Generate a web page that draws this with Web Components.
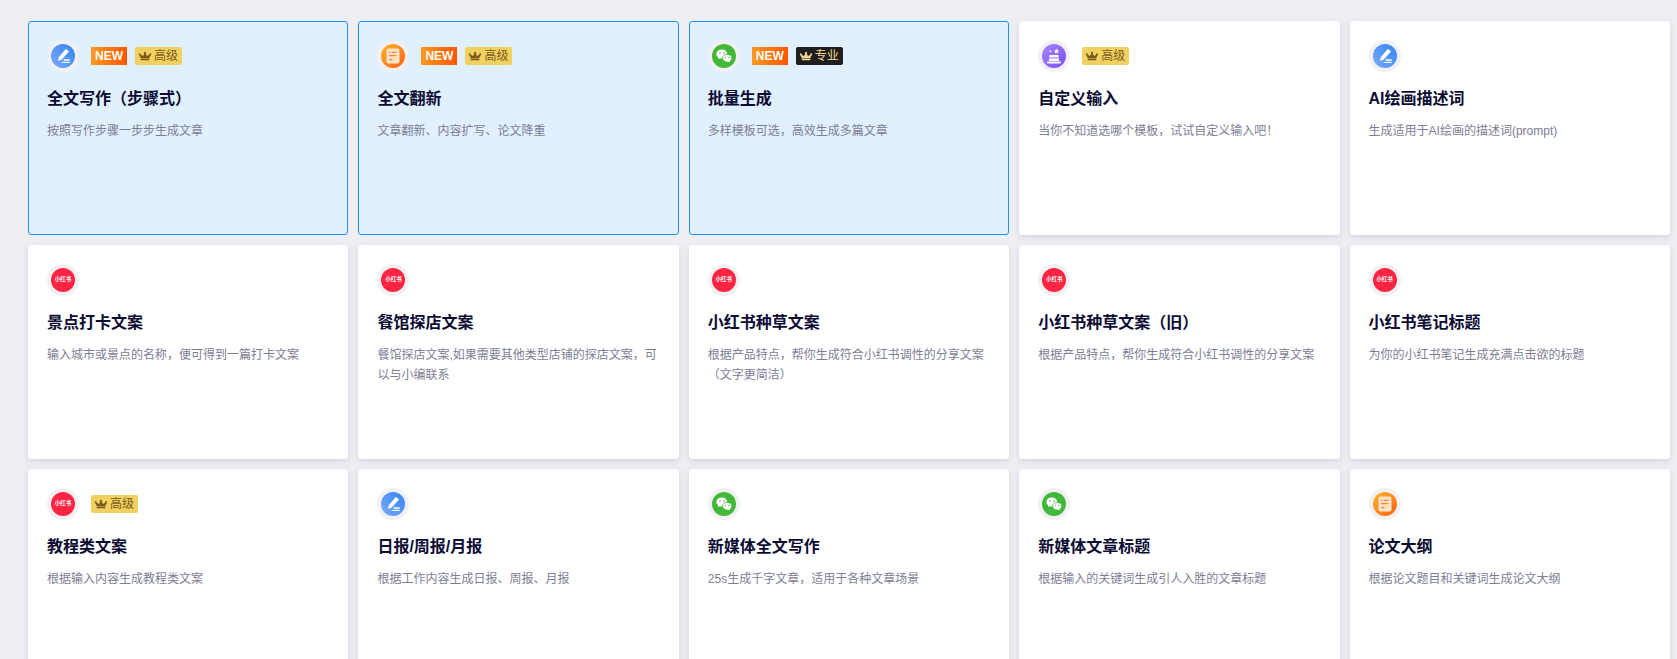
<!DOCTYPE html>
<html lang="zh-CN"><head><meta charset="utf-8"><title>Templates</title>
<style>
html,body{margin:0;height:659px;overflow:hidden;background:#eeeef3;font-family:"Liberation Sans","Noto Sans CJK SC",sans-serif}
</style></head><body>
<card-grid>
<tool-card selected icon="pen" name="全文写作&#65288;步骤式&#65289;" desc="按照写作步骤一步步生成文章"><new-badge></new-badge><tier-badge>高级</tier-badge></tool-card>
<tool-card selected icon="doc" name="全文翻新" desc="文章翻新、内容扩写、论文降重"><new-badge></new-badge><tier-badge>高级</tier-badge></tool-card>
<tool-card selected icon="wechat" name="批量生成" desc="多样模板可选&#65292;高效生成多篇文章"><new-badge></new-badge><tier-badge dark>专业</tier-badge></tool-card>
<tool-card icon="magic" name="自定义输入" desc="当你不知道选哪个模板&#65292;试试自定义输入吧&#65281;"><tier-badge>高级</tier-badge></tool-card>
<tool-card icon="pen" name="AI绘画描述词" desc="生成适用于AI绘画的描述词(prompt)"></tool-card>
<tool-card icon="red" name="景点打卡文案" desc="输入城市或景点的名称&#65292;便可得到一篇打卡文案"></tool-card>
<tool-card icon="red" name="餐馆探店文案" desc="餐馆探店文案,如果需要其他类型店铺的探店文案&#65292;可以与小编联系"></tool-card>
<tool-card icon="red" name="小红书种草文案" desc="根据产品特点&#65292;帮你生成符合小红书调性的分享文案&#65288;文字更简洁&#65289;"></tool-card>
<tool-card icon="red" name="小红书种草文案&#65288;旧&#65289;" desc="根据产品特点&#65292;帮你生成符合小红书调性的分享文案"></tool-card>
<tool-card icon="red" name="小红书笔记标题" desc="为你的小红书笔记生成充满点击欲的标题"></tool-card>
<tool-card icon="red" name="教程类文案" desc="根据输入内容生成教程类文案"><tier-badge>高级</tier-badge></tool-card>
<tool-card icon="pen" name="日报/周报/月报" desc="根据工作内容生成日报、周报、月报"></tool-card>
<tool-card icon="wechat" name="新媒体全文写作" desc="25s生成千字文章&#65292;适用于各种文章场景"></tool-card>
<tool-card icon="wechat" name="新媒体文章标题" desc="根据输入的关键词生成引人入胜的文章标题"></tool-card>
<tool-card icon="doc" name="论文大纲" desc="根据论文题目和关键词生成论文大纲"></tool-card>
</card-grid>
<script>
const CROWN='<svg viewBox="0 0 14 11" width="12" height="10" aria-hidden="true"><path fill="currentColor" d="M7 .6a1.3 1.3 0 0 1 .8 2.3L9.4 5.4 12 3.9a1.2 1.2 0 1 1 1.1.9L12 8H2L.9 4.8A1.2 1.2 0 1 1 2 3.9l2.6 1.5L6.2 2.9A1.3 1.3 0 0 1 7 .6zM2 8.8h10V10.6H2z"/></svg>';
customElements.define('card-grid',class extends HTMLElement{constructor(){super();this.attachShadow({mode:'open'}).innerHTML=`<style>:host{display:grid;grid-template-columns:repeat(5,320.4px);grid-auto-rows:214px;gap:10px;padding:21px 0 0 28px}</style><slot></slot>`}});
customElements.define('new-badge',class extends HTMLElement{constructor(){super();this.attachShadow({mode:'open'}).innerHTML=`<style>:host{display:inline-flex;align-items:center;justify-content:center;width:36px;height:18px;background:linear-gradient(90deg,#ff9a1e,#ff5500);color:#fff;font:700 12px/18px "Liberation Sans",sans-serif}</style>NEW`}});
customElements.define('tier-badge',class extends HTMLElement{constructor(){super();this.attachShadow({mode:'open'}).innerHTML=`<style>:host{display:inline-flex;align-items:center;gap:3px;height:18px;padding:0 4px;border-radius:2px;background:#f0d160;color:#7a5a1c;font:12px/18px "Liberation Sans","Noto Sans CJK SC",sans-serif}:host([dark]){background:#1f1e1c;color:#f2d795}svg{display:block}</style>${CROWN}<slot></slot>`}});
const ICONS={
pen:`<defs><linearGradient id="g" x1="0" y1="1" x2="1" y2="0"><stop offset="0" stop-color="#7fa8ff"/><stop offset="1" stop-color="#2f86f0"/></linearGradient></defs><circle cx="12" cy="12" r="12" fill="url(#g)"/><path fill="#fff" d="M15 4.8l3 2.6-7.2 8.2-3.8 1.4.9-3.9z"/><rect x="12.6" y="15.2" width="6.4" height="1.6" rx=".8" fill="#fff"/><rect x="10.5" y="17.8" width="8.5" height="1.3" rx=".6" fill="#fff" opacity=".85"/>`,
doc:`<defs><linearGradient id="g" x1="0" y1="0" x2="1" y2="1"><stop offset="0" stop-color="#ffb52e"/><stop offset="1" stop-color="#ff5f12"/></linearGradient></defs><circle cx="12" cy="12" r="12" fill="url(#g)"/><rect x="5.5" y="4.5" width="13" height="15" rx="2" fill="#ffe3c8"/><path stroke="#ff8a2e" stroke-width="1.2" d="M8 8.4h1.2M10.5 8.4h5M8 11.6h7.5M8 15.6h3.5"/>`,
wechat:`<circle cx="12" cy="12" r="12" fill="#42b838"/><ellipse cx="9.8" cy="10" rx="5.4" ry="4.6" fill="#fff"/><path fill="#fff" d="M6.6 12.6l-.6 2.4 2.6-1.2z"/><ellipse cx="15.2" cy="14.2" rx="4.6" ry="3.9" fill="#fff" stroke="#42b838" stroke-width=".8"/><path fill="#fff" d="M17 16.6l1 1.8-2.4-1z"/><circle cx="8" cy="9" r=".8" fill="#42b838"/><circle cx="11.6" cy="9" r=".8" fill="#42b838"/><circle cx="13.6" cy="13.4" r=".6" fill="#42b838"/><circle cx="16.8" cy="13.4" r=".6" fill="#42b838"/>`,
magic:`<defs><linearGradient id="g" x1="0" y1="0" x2="1" y2="1"><stop offset="0" stop-color="#a685ff"/><stop offset="1" stop-color="#7a4df0"/></linearGradient></defs><circle cx="12" cy="12" r="12" fill="url(#g)"/><path fill="#fff" d="M14.5 4.5l.8 1.7 1.8.3-1.3 1.3.3 1.8-1.6-.9-1.6.9.3-1.8-1.3-1.3 1.8-.3z"/><path fill="#e8dcff" d="M8.3 5.5l.5 1.2 1.2.5-1.2.5-.5 1.2-.5-1.2-1.2-.5 1.2-.5z"/><path fill="#fff" d="M7.5 11h9l.6 6H6.9z" opacity=".95"/><rect x="5" y="17.6" width="14" height="1.8" rx=".9" fill="#fff"/><rect x="7.3" y="13.4" width="9.4" height="1" fill="#9a74f8"/>`};
customElements.define('tool-icon',class extends HTMLElement{
 connectedCallback(){const k=this.getAttribute('kind');
  const inner=k==='red'?`<span class="red"><b>小红书</b></span>`:`<svg viewBox="0 0 24 24" width="24" height="24" aria-hidden="true">${ICONS[k]}</svg>`;
  this.attachShadow({mode:'open'}).innerHTML=`<style>:host{display:flex;align-items:center;justify-content:center;width:32px;height:32px;border-radius:50%;background:#f1f1f4;flex:none}svg{display:block}.red{width:24px;height:24px;border-radius:50%;background:#ff2442;display:flex;align-items:center;justify-content:center;overflow:hidden}b{color:#fff;font:700 5.5px/1 "Noto Sans CJK SC",sans-serif;white-space:nowrap}</style>${inner}`}
});
customElements.define('tool-card',class extends HTMLElement{
 connectedCallback(){
  this.attachShadow({mode:'open'}).innerHTML=`<style>
  :host{display:block;box-sizing:border-box;padding:19px;background:#fff;border-radius:3px;box-shadow:0 2px 6px rgba(120,120,150,.22);min-width:0}
  :host([selected]){background:#e0f0ff;border:1px solid #1e90ff;padding:18px;box-shadow:none}
  .head{display:flex;align-items:center;gap:8px;height:32px}
  .ic{margin-right:4px}
  h3{margin:15px 0 0;font:700 16px/24px "Liberation Sans","Noto Sans CJK SC",sans-serif;color:#0b0b33}
  p{margin:10px 0 0;font:12px/20px "Liberation Sans","Noto Sans CJK SC",sans-serif;color:#7d7d95}
  </style><div class="head"><tool-icon class="ic" kind="${this.getAttribute('icon')}"></tool-icon><slot></slot></div><h3>${this.getAttribute('name')}</h3><p>${this.getAttribute('desc')}</p>`}
});
</script>
</body></html>
